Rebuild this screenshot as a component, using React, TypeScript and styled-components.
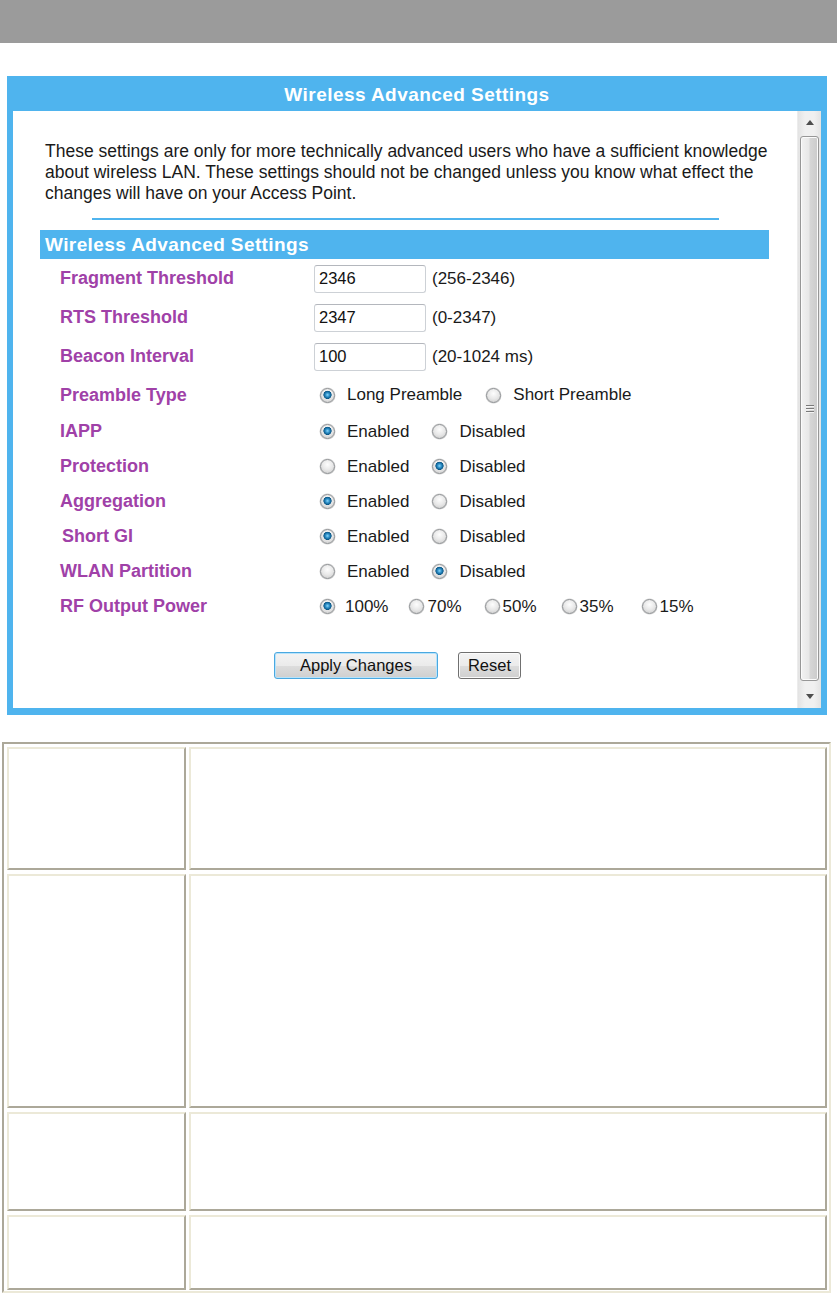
import React from 'react';
import styled, { createGlobalStyle } from 'styled-components';

const GlobalStyle = createGlobalStyle`
  html, body { margin: 0; padding: 0; background: #ffffff; }
  body {
    font-family: "Liberation Sans", Arial, sans-serif;
    color: #1c1c1c;
  }
  * { box-sizing: border-box; }
`;

const BLUE = '#4fb4ee';

const Page = styled.div`
  display: flex;
  flex-direction: column;
  width: 837px;
`;

const TopBar = styled.div`
  height: 43px;
  background: #9b9b9b;
`;

const Panel = styled.section`
  margin: 33px 0 0 7px;
  width: 820px;
  height: 639px;
  background: ${BLUE};
  padding: 0 6px 7px 6px;
  display: flex;
  flex-direction: column;
`;

const PanelTitle = styled.h1`
  margin: 0;
  height: 35px;
  padding-top: 2px;
  display: flex;
  align-items: center;
  justify-content: center;
  color: #ffffff;
  font-size: 19px;
  font-weight: bold;
  letter-spacing: 0.45px;
`;

const PanelBody = styled.div`
  flex: 1;
  display: flex;
  background: #ffffff;
  overflow: hidden;
`;

const Content = styled.div`
  flex: 1;
  display: flex;
  flex-direction: column;
  padding-top: 30px;
`;

const Intro = styled.p`
  margin: 0 0 0 32px;
  font-size: 17.5px;
  line-height: 21px;
  white-space: nowrap;
  color: #1a1a1a;
`;

const Divider = styled.hr`
  margin: 14px auto 0;
  width: 627px;
  height: 2px;
  border: none;
  background: ${BLUE};
`;

const Settings = styled.div`
  margin: 10px 28px 0 27px;
  display: flex;
  flex-direction: column;
`;

const SectionHeader = styled.h2`
  margin: 0;
  height: 29px;
  padding-left: 5px;
  display: flex;
  align-items: center;
  background: ${BLUE};
  color: #ffffff;
  font-size: 19px;
  font-weight: bold;
  letter-spacing: 0.4px;
`;

const Row = styled.div<{ $h: number }>`
  display: grid;
  grid-template-columns: 274px 1fr;
  align-items: center;
  height: ${(p) => p.$h}px;
`;

const Label = styled.span<{ $indent?: number }>`
  padding-left: ${(p) => 20 + (p.$indent ?? 0)}px;
  color: #a041a8;
  font-weight: bold;
  font-size: 18px;
`;

const ValueCell = styled.div`
  display: flex;
  align-items: center;
  font-size: 17px;
  color: #1a1a1a;
`;

const TextInput = styled.input`
  width: 112px;
  height: 28px;
  margin: 0 6px 0 0;
  padding: 0 4px;
  border: 1px solid #cdd1d6;
  border-top-color: #b4b7bd;
  border-radius: 3px;
  font-family: "Liberation Sans", Arial, sans-serif;
  font-size: 16.5px;
  color: #111;
  background: #fff;
  outline: none;
`;

const Hint = styled.span`
  font-size: 17px;
`;

const Option = styled.label<{ $space: number }>`
  display: inline-flex;
  align-items: center;
  margin-right: ${(p) => p.$space}px;
  font-size: 17px;
  color: #1a1a1a;
`;

const Radio = styled.input<{ $gap: number; $lead: number }>`
  appearance: none;
  -webkit-appearance: none;
  flex: none;
  width: 15px;
  height: 15px;
  margin: 0 ${(p) => p.$gap}px 0 ${(p) => p.$lead}px;
  border-radius: 50%;
  border: 1px solid #8a8d90;
  box-shadow: 0 0 0 0.5px #cfcfcf;
  background: radial-gradient(circle at 50% 35%, #fdfdfd 0%, #e8e8e8 50%, #c6c6c6 100%);
  &:checked {
    background:
      radial-gradient(circle at 50% 45%, #8ad8fa 0px, #2e8fc8 2px, #0b5786 3.8px, rgba(0,0,0,0) 4.4px),
      radial-gradient(circle at 50% 35%, #fdfdfd 0%, #e8e8e8 50%, #c6c6c6 100%);
  }
`;

const ButtonRow = styled.div`
  display: flex;
  gap: 20px;
  margin-top: 28px;
  padding-left: 261px;
`;

const Button = styled.button<{ $primary?: boolean }>`
  height: 27px;
  padding: 0 ${(p) => (p.$primary ? 25 : 9)}px;
  font-family: "Liberation Sans", Arial, sans-serif;
  font-size: 16.5px;
  color: #111;
  border-radius: 3px;
  border: 1px solid ${(p) => (p.$primary ? '#4aa8e0' : '#707070')};
  box-shadow: ${(p) => (p.$primary ? 'inset 0 0 0 1px #b7e3fb' : 'inset 0 0 0 1px #fbfbfb')};
  background: linear-gradient(to bottom, #f3f3f3 0%, #ebebeb 50%, #dddddd 51%, #cfcfcf 100%);
`;

const ScrollBar = styled.div`
  width: 24px;
  display: flex;
  flex-direction: column;
  background: linear-gradient(to right, #e3e3e3, #f0f0f0 30%, #f0f0f0 70%, #e3e3e3);
  border-left: 1px solid #ececec;
`;

const ScrollArrow = styled.div`
  height: 23px;
  display: flex;
  align-items: center;
  justify-content: center;
`;

const Thumb = styled.div`
  flex: 1;
  margin: 2px 2px 4px 2px;
  border: 1px solid #979797;
  border-radius: 3px;
  background: linear-gradient(to right, #f2f2f2 0%, #e8e8e8 45%, #d6d6d6 55%, #cbcbcb 100%);
  box-shadow: inset 0 0 0 1px #fbfbfb;
  display: flex;
  align-items: center;
  justify-content: center;
`;

const Grip = styled.div`
  width: 8px;
  display: flex;
  flex-direction: column;
  gap: 1px;
`;

const GripLine = styled.span`
  height: 2px;
  background: #7a7a7a;
  border-bottom: 1px solid #f4f4f4;
`;

const DescTable = styled.div`
  margin: 27px 0 0 2px;
  width: 829px;
  border-style: solid;
  border-width: 2px;
  border-color: #aca899 #ece9d8 #ece9d8 #aca899;
  padding: 3px 2px 1px 3px;
  display: grid;
  grid-template-columns: 179px 638px;
  grid-template-rows: 123px 234px 99px 75px;
  column-gap: 3px;
  row-gap: 4px;
`;

const DescCell = styled.div`
  border-style: solid;
  border-width: 2px;
  border-color: #ece9d8 #aca899 #aca899 #ece9d8;
`;

type RadioOpt = { label: string; checked?: boolean; gap?: number; space?: number };

type RowData =
  | { label: string; h: number; indent?: number; kind: 'input'; value: string; hint: string }
  | { label: string; h: number; indent?: number; kind: 'radio'; name: string; options: RadioOpt[] };

const enDis = (enabled: boolean): RadioOpt[] => [
  { label: 'Enabled', checked: enabled, space: 23 },
  { label: 'Disabled', checked: !enabled },
];

const rows: RowData[] = [
  { label: 'Fragment Threshold', h: 39, kind: 'input', value: '2346', hint: '(256-2346)' },
  { label: 'RTS Threshold', h: 39, kind: 'input', value: '2347', hint: '(0-2347)' },
  { label: 'Beacon Interval', h: 39, kind: 'input', value: '100', hint: '(20-1024 ms)' },
  {
    label: 'Preamble Type',
    h: 38,
    kind: 'radio',
    name: 'preamble',
    options: [
      { label: 'Long Preamble', checked: true, space: 24 },
      { label: 'Short Preamble' },
    ],
  },
  { label: 'IAPP', h: 35, kind: 'radio', name: 'iapp', options: enDis(true) },
  { label: 'Protection', h: 35, kind: 'radio', name: 'protection', options: enDis(false) },
  { label: 'Aggregation', h: 35, kind: 'radio', name: 'aggregation', options: enDis(true) },
  { label: 'Short GI', h: 35, indent: 2, kind: 'radio', name: 'shortgi', options: enDis(true) },
  { label: 'WLAN Partition', h: 35, kind: 'radio', name: 'partition', options: enDis(false) },
  {
    label: 'RF Output Power',
    h: 35,
    kind: 'radio',
    name: 'rfpower',
    options: [
      { label: '100%', checked: true, gap: 10, space: 21 },
      { label: '70%', gap: 3, space: 23 },
      { label: '50%', gap: 3, space: 25 },
      { label: '35%', gap: 3, space: 28 },
      { label: '15%', gap: 3 },
    ],
  },
];

const ArrowIcon = ({ down }: { down?: boolean }) => (
  <svg width="8" height="5" viewBox="0 0 8 5">
    <path d={down ? 'M0 0 L8 0 L4 5 Z' : 'M0 5 L8 5 L4 0 Z'} fill="#4d4d4d" />
  </svg>
);

export default function App() {
  return (
    <Page>
      <GlobalStyle />
      <TopBar />
      <Panel>
        <PanelTitle>Wireless Advanced Settings</PanelTitle>
        <PanelBody>
          <Content>
            <Intro>
              These settings are only for more technically advanced users who have a sufficient knowledge
              <br />
              about wireless LAN. These settings should not be changed unless you know what effect the
              <br />
              changes will have on your Access Point.
            </Intro>
            <Divider />
            <Settings>
              <SectionHeader>Wireless Advanced Settings</SectionHeader>
              {rows.map((r) => (
                <Row key={r.label} $h={r.h}>
                  <Label $indent={r.indent}>{r.label}</Label>
                  <ValueCell>
                    {r.kind === 'input' ? (
                      <>
                        <TextInput type="text" defaultValue={r.value} />
                        <Hint>{r.hint}</Hint>
                      </>
                    ) : (
                      r.options.map((o, i) => (
                        <Option key={o.label} $space={o.space ?? 0}>
                          <Radio
                            type="radio"
                            name={r.name}
                            defaultChecked={!!o.checked}
                            $gap={o.gap ?? 12}
                            $lead={i === 0 ? 6 : 0}
                          />
                          {o.label}
                        </Option>
                      ))
                    )}
                  </ValueCell>
                </Row>
              ))}
            </Settings>
            <ButtonRow>
              <Button $primary>Apply Changes</Button>
              <Button>Reset</Button>
            </ButtonRow>
          </Content>
          <ScrollBar>
            <ScrollArrow>
              <ArrowIcon />
            </ScrollArrow>
            <Thumb>
              <Grip>
                <GripLine />
                <GripLine />
                <GripLine />
              </Grip>
            </Thumb>
            <ScrollArrow>
              <ArrowIcon down />
            </ScrollArrow>
          </ScrollBar>
        </PanelBody>
      </Panel>
      <DescTable>
        <DescCell />
        <DescCell />
        <DescCell />
        <DescCell />
        <DescCell />
        <DescCell />
        <DescCell />
        <DescCell />
      </DescTable>
    </Page>
  );
}
